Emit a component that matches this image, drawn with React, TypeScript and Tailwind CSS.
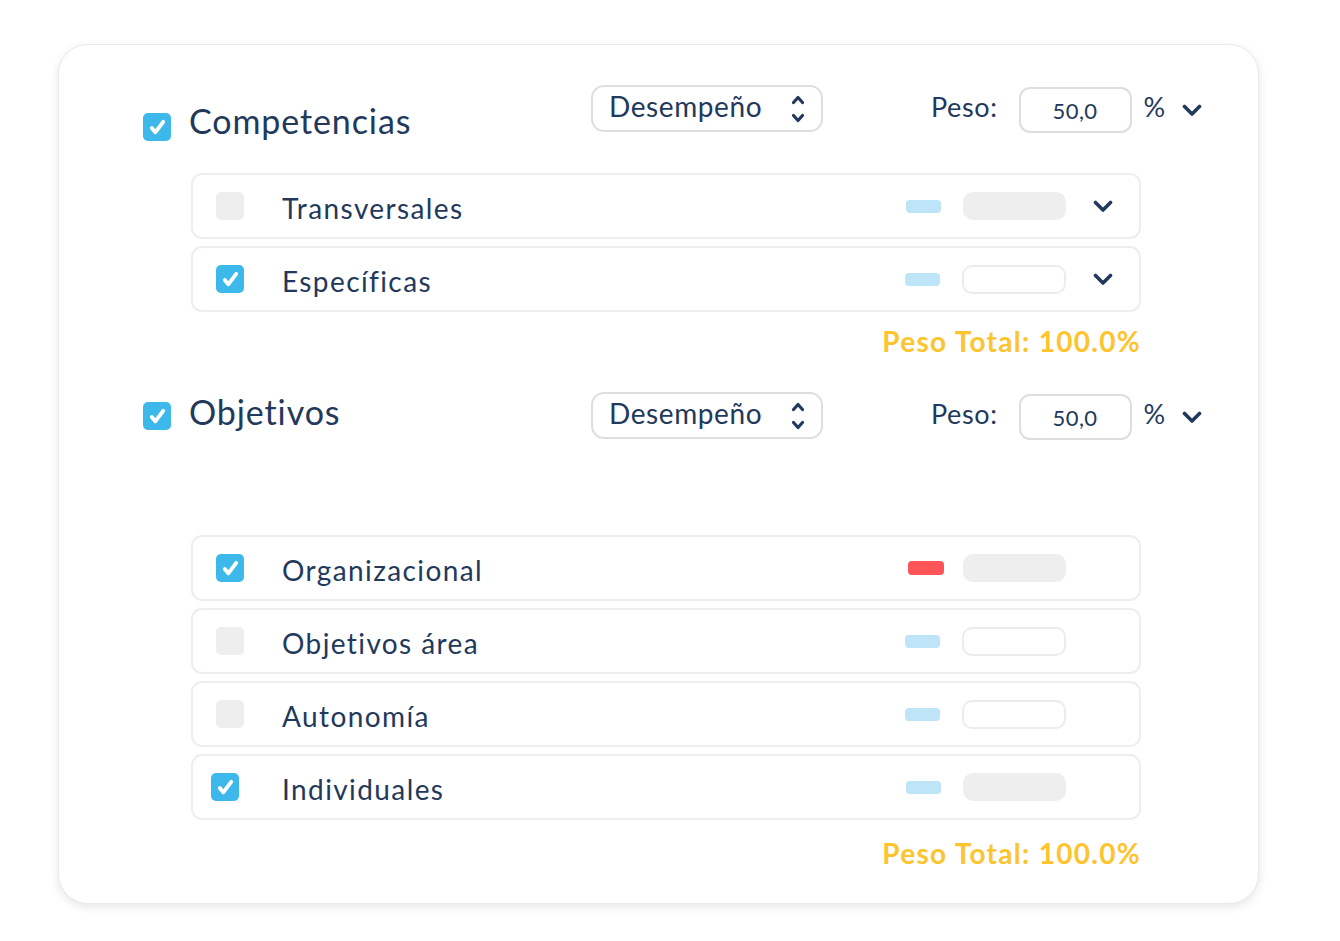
import React from "react";

const NAVY = "text-[#22395b]";

function CheckBox({ checked }: { checked: boolean }) {
  if (!checked) return <div className="h-[28px] w-[28px] shrink-0 rounded-[5px] bg-[#eeeeee]" />;
  return (
    <div className="flex h-[28px] w-[28px] shrink-0 items-center justify-center rounded-[5px] bg-[#3cb8eb]">
      <svg viewBox="0 0 24 24" className="h-[21px] w-[21px]" fill="none" stroke="white" strokeWidth={4.4} strokeLinecap="round" strokeLinejoin="round">
        <path d="M5.5 12.5l4 5L18.5 5.5" />
      </svg>
    </div>
  );
}

function Chevron({ className = "" }: { className?: string }) {
  return (
    <svg viewBox="0 0 20 13" className={"h-[13px] w-[20px] shrink-0 " + className} fill="none" stroke="#22395b" strokeWidth={3.6} strokeLinecap="round" strokeLinejoin="round">
      <path d="M2.5 2.5L10 10L17.5 2.5" />
    </svg>
  );
}

function UpDown() {
  return (
    <svg viewBox="0 0 14 30" className="h-[30px] w-[14px]" fill="none" stroke="#22395b" strokeWidth={3.2} strokeLinecap="round" strokeLinejoin="round">
      <path d="M2.5 8.5L7 3.5L11.5 8.5" />
      <path d="M2.5 21.5L7 26.5L11.5 21.5" />
    </svg>
  );
}

function Header({ title, low }: { title: string; low: boolean }) {
  return (
    <div className="flex h-[48px] items-start">
      <div className="flex w-[448px] items-start">
        <div className={low ? "mt-[28px]" : "mt-[10px]"}>
          <CheckBox checked />
        </div>
        <span className={"ml-[18px] text-[34px] leading-[44px] tracking-[0.9px] " + (low ? "mt-[14px] " : "mt-[-2px] ") + NAVY}>{title}</span>
      </div>
      <div className="flex h-[47px] w-[232px] items-center justify-between rounded-[13px] border-2 border-[#dedede] pl-[16px] pr-[16px]">
        <span className={"-mt-[5px] text-[28px] leading-none tracking-[0.6px] " + NAVY}>Desempeño</span>
        <UpDown />
      </div>
      <span className={"ml-[108px] mt-[2px] text-[27px] leading-[40px] tracking-[0.6px] " + NAVY}>Peso:</span>
      <div className={"ml-[21px] mt-[2px] flex h-[46px] w-[113px] items-center justify-center rounded-[11px] border-2 border-[#dedede] text-[22px] tracking-[0.4px] " + NAVY}>
        50,0
      </div>
      <span className={"ml-[12px] mt-[2px] text-[27px] leading-[40px] " + NAVY}>%</span>
      <Chevron className="ml-[17px] mt-[19px]" />
    </div>
  );
}

type Row = { label: string; checked: boolean; pill: "blue" | "red"; box: "fill" | "line"; shift?: boolean };

function RowItem({ row, hasChevronCol }: { row: Row; hasChevronCol: boolean }) {
  return (
    <div className="flex h-[66px] items-center rounded-[11px] border-2 border-[#eeeeee] pl-[23px] pr-[26px]">
      <div className={row.shift ? "-ml-[5px] mr-[5px]" : ""}>
        <CheckBox checked={row.checked} />
      </div>
      <span className={"ml-[38px] mt-[4px] flex-1 text-[28px] leading-none tracking-[1.4px] " + NAVY}>{row.label}</span>
      <div className={row.pill === "red" ? "ml-[2px] h-[14px] w-[36px] rounded-[4px] bg-[#fd5457]" : "h-[13px] w-[35px] rounded-[4px] bg-[#bde4f7]"} />
      <div className={row.pill === "red" ? "ml-[19px]" : "ml-[22px]"}>
        {row.box === "fill" ? (
          <div className="h-[28px] w-[103px] rounded-[10px] bg-[#eeeeee]" />
        ) : (
          <div className="h-[29px] w-[104px] rounded-[10px] border-2 border-[#ececec]" />
        )}
      </div>
      <div className="ml-[27px] flex w-[20px] justify-center">
        {hasChevronCol ? <Chevron /> : null}
      </div>
    </div>
  );
}

function Total() {
  return (
    <div className="text-right text-[28px] font-bold leading-[36px] tracking-[1.3px] text-[#fdc42d]">Peso Total: 100.0%</div>
  );
}

const COMPETENCIAS: Row[] = [
  { label: "Transversales", checked: false, pill: "blue", box: "fill" },
  { label: "Específicas", checked: true, pill: "blue", box: "line" },
];

const OBJETIVOS: Row[] = [
  { label: "Organizacional", checked: true, pill: "red", box: "fill" },
  { label: "Objetivos área", checked: false, pill: "blue", box: "line" },
  { label: "Autonomía", checked: false, pill: "blue", box: "line" },
  { label: "Individuales", checked: true, pill: "blue", box: "fill", shift: true },
];

export default function App() {
  return (
    <div className="min-h-[941px] w-[1340px] bg-white pt-[44px] pl-[58px]" style={{ fontFamily: "Lato, 'Noto Sans', sans-serif" }}>
      <div className="h-[860px] w-[1201px] rounded-[30px] border border-[#e9e9e9] bg-white pt-[40px] pl-[84px] shadow-[0_3px_10px_rgba(0,0,0,0.10)]">
        <Header title="Competencias" low />
        <div className="ml-[48px] mt-[40px] w-[950px]">
          <div className="flex flex-col gap-[7px]">
            {COMPETENCIAS.map((r) => (
              <RowItem key={r.label} row={r} hasChevronCol />
            ))}
          </div>
          <div className="mt-[11px]">
            <Total />
          </div>
        </div>
        <div className="mt-[33px]">
          <Header title="Objetivos" low={false} />
        </div>
        <div className="ml-[48px] mt-[95px] w-[950px]">
          <div className="flex flex-col gap-[7px]">
            {OBJETIVOS.map((r) => (
              <RowItem key={r.label} row={r} hasChevronCol={false} />
            ))}
          </div>
          <div className="mt-[15px]">
            <Total />
          </div>
        </div>
      </div>
    </div>
  );
}
